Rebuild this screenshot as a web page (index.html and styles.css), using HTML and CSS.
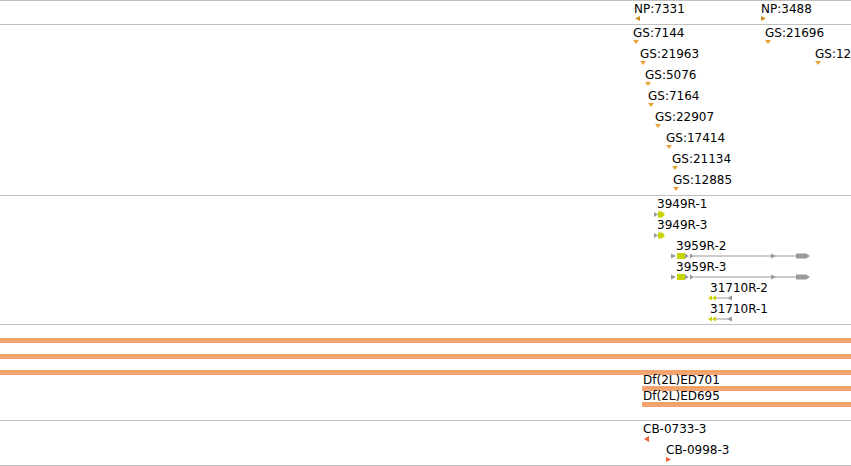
FILE: index.html
```html
<!DOCTYPE html>
<html lang="en">
<head>
  <meta charset="UTF-8" />
  <title>Track panel</title>
  <link rel="stylesheet" href="styles.css">
</head>
<body>
  <div class="panel">

    <!-- protein matches -->
    <div class="track track-proteins">
      <div class="row">
        <div class="feature np" style="left: 634px;">
          <span class="label">NP:7331</span>
          <svg class="glyph" width="6" height="5" viewBox="0 0 6 5"><path d="M6 0V5L1 2.5Z"/></svg>
        </div>
        <div class="feature np" style="left: 761px;">
          <span class="label">NP:3488</span>
          <svg class="glyph" width="5" height="5" viewBox="0 0 5 5"><path d="M0 0L5 2.5L0 5Z"/></svg>
        </div>
      </div>
    </div>

    <!-- insertion sites -->
    <div class="track track-insertions">
      <div class="row">
        <div class="feature gs" style="left: 633px;">
          <span class="label">GS:7144</span>
          <svg class="glyph" width="6" height="4" viewBox="0 0 6 4"><path d="M0 0H6L3 4Z"/></svg>
        </div>
        <div class="feature gs" style="left: 765px;">
          <span class="label">GS:21696</span>
          <svg class="glyph" width="6" height="4" viewBox="0 0 6 4"><path d="M0 0H6L3 4Z"/></svg>
        </div>
      </div>
      <div class="row">
        <div class="feature gs" style="left: 640px;">
          <span class="label">GS:21963</span>
          <svg class="glyph" width="6" height="4" viewBox="0 0 6 4"><path d="M0 0H6L3 4Z"/></svg>
        </div>
        <div class="feature gs" style="left: 815px;">
          <span class="label">GS:12</span>
          <svg class="glyph" width="6" height="4" viewBox="0 0 6 4"><path d="M0 0H6L3 4Z"/></svg>
        </div>
      </div>
      <div class="row">
        <div class="feature gs" style="left: 645px;">
          <span class="label">GS:5076</span>
          <svg class="glyph" width="6" height="4" viewBox="0 0 6 4"><path d="M0 0H6L3 4Z"/></svg>
        </div>
      </div>
      <div class="row">
        <div class="feature gs" style="left: 648px;">
          <span class="label">GS:7164</span>
          <svg class="glyph" width="6" height="4" viewBox="0 0 6 4"><path d="M0 0H6L3 4Z"/></svg>
        </div>
      </div>
      <div class="row">
        <div class="feature gs" style="left: 655px;">
          <span class="label">GS:22907</span>
          <svg class="glyph" width="6" height="4" viewBox="0 0 6 4"><path d="M0 0H6L3 4Z"/></svg>
        </div>
      </div>
      <div class="row">
        <div class="feature gs" style="left: 666px;">
          <span class="label">GS:17414</span>
          <svg class="glyph" width="6" height="4" viewBox="0 0 6 4"><path d="M0 0H6L3 4Z"/></svg>
        </div>
      </div>
      <div class="row">
        <div class="feature gs" style="left: 672px;">
          <span class="label">GS:21134</span>
          <svg class="glyph" width="6" height="4" viewBox="0 0 6 4"><path d="M0 0H6L3 4Z"/></svg>
        </div>
      </div>
      <div class="row">
        <div class="feature gs" style="left: 673px;">
          <span class="label">GS:12885</span>
          <svg class="glyph" width="6" height="4" viewBox="0 0 6 4"><path d="M0 0H6L3 4Z"/></svg>
        </div>
      </div>
    </div>

    <!-- gene models -->
    <div class="track track-genes">
      <div class="row">
        <div class="feature gene" style="left: 654px;">
          <span class="label" style="margin-left: 3px;">3949R-1</span>
          <svg class="glyph" width="11" height="7" viewBox="0 0 11 7">
            <path class="utr" d="M0 1L4 3.5L0 6Z"/>
            <path class="cds" d="M4 .5H8L11 3.5L8 6.5H4Z"/>
          </svg>
        </div>
      </div>
      <div class="row">
        <div class="feature gene" style="left: 654px;">
          <span class="label" style="margin-left: 3px;">3949R-3</span>
          <svg class="glyph" width="11" height="7" viewBox="0 0 11 7">
            <path class="utr" d="M0 1L4 3.5L0 6Z"/>
            <path class="cds" d="M4 .5H8L11 3.5L8 6.5H4Z"/>
          </svg>
        </div>
      </div>
      <div class="row">
        <div class="feature gene" style="left: 671px;">
          <span class="label" style="margin-left: 5px;">3959R-2</span>
          <svg class="glyph" width="139" height="6" viewBox="0 0 139 6">
            <path class="utr" d="M0 .5L5 3L0 5.5Z"/>
            <rect class="cds" x="6" y="0" width="8" height="6"/>
            <path class="utr" d="M14 .5L18 3L14 5.5ZM19 .5L23 3L19 5.5Z"/>
            <rect class="utr" x="23" y="2.5" width="102" height="1"/>
            <path class="utr" d="M100 .5L105 3L100 5.5Z"/>
            <path class="utr" d="M125 .5H135L139 3L135 5.5H125Z"/>
          </svg>
        </div>
      </div>
      <div class="row">
        <div class="feature gene" style="left: 671px;">
          <span class="label" style="margin-left: 5px;">3959R-3</span>
          <svg class="glyph" width="139" height="6" viewBox="0 0 139 6">
            <path class="utr" d="M0 .5L5 3L0 5.5Z"/>
            <rect class="cds" x="6" y="0" width="8" height="6"/>
            <path class="utr" d="M14 .5L18 3L14 5.5ZM19 .5L23 3L19 5.5Z"/>
            <rect class="utr" x="23" y="2.5" width="102" height="1"/>
            <path class="utr" d="M100 .5L105 3L100 5.5Z"/>
            <path class="utr" d="M125 .5H135L139 3L135 5.5H125Z"/>
          </svg>
        </div>
      </div>
      <div class="row">
        <div class="feature gene" style="left: 708px;">
          <span class="label" style="margin-left: 2px;">31710R-2</span>
          <svg class="glyph" width="24" height="6" viewBox="0 0 24 6">
            <path class="cds" d="M4 .5V5.5L0 3ZM8 .5V5.5L4 3Z"/>
            <rect class="utr" x="8" y="2.5" width="12" height="1"/>
            <path class="utr" d="M24 .5V5.5L19 3Z"/>
          </svg>
        </div>
      </div>
      <div class="row">
        <div class="feature gene" style="left: 708px;">
          <span class="label" style="margin-left: 2px;">31710R-1</span>
          <svg class="glyph" width="24" height="6" viewBox="0 0 24 6">
            <path class="cds" d="M4 .5V5.5L0 3ZM8 .5V5.5L4 3Z"/>
            <rect class="utr" x="8" y="2.5" width="12" height="1"/>
            <path class="utr" d="M24 .5V5.5L19 3Z"/>
          </svg>
        </div>
      </div>
    </div>

    <!-- deficiencies -->
    <div class="track track-deletions">
      <div class="row"><div class="deletion" style="left: 0;"><div class="bar"></div></div></div>
      <div class="row"><div class="deletion" style="left: 0;"><div class="bar"></div></div></div>
      <div class="row"><div class="deletion" style="left: 0;"><div class="bar"></div></div></div>
      <div class="row">
        <div class="deletion" style="left: 642px;">
          <span class="label">Df(2L)ED701</span>
          <div class="bar"></div>
        </div>
      </div>
      <div class="row">
        <div class="deletion" style="left: 642px;">
          <span class="label">Df(2L)ED695</span>
          <div class="bar"></div>
        </div>
      </div>
    </div>

    <!-- cDNA clones -->
    <div class="track track-clones">
      <div class="row">
        <div class="feature cb" style="left: 643px;">
          <span class="label">CB-0733-3</span>
          <svg class="glyph" width="6" height="6" viewBox="0 0 6 6"><path d="M6 0V6L1 3Z"/></svg>
        </div>
      </div>
      <div class="row">
        <div class="feature cb" style="left: 666px;">
          <span class="label">CB-0998-3</span>
          <svg class="glyph" width="5" height="5" viewBox="0 0 5 5"><path d="M0 0L5 2.5L0 5Z"/></svg>
        </div>
      </div>
    </div>

  </div>
</body>
</html>
```

FILE: styles.css
```css
:root {
  --track-border: #c0c0c0;
  --np-color: #c8901c;
  --gs-color: #eaa234;
  --cds-color: #c6d300;
  --utr-color: #999999;
  --deletion-color: #f5a46e;
  --clone-color: #f3603c;
}
html,
body {
  margin: 0;
}
body {
  background-color: #ffffff;
  color: #000000;
  font-family: "DejaVu Sans", sans-serif;
  font-size: 12px;
  width: 851px;
  height: 466px;
  overflow: hidden;
}
.panel {
  display: flex;
  flex-direction: column;
}
.track {
  box-sizing: border-box;
  border-top: 1px solid var(--track-border);
  padding-top: 2px;
  display: flex;
  flex-direction: column;
  overflow: hidden;
}
.track:last-child {
  border-bottom: 1px solid var(--track-border);
}
.track-proteins {
  height: 24px;
}
.track-insertions {
  height: 171px;
}
.track-genes {
  height: 129px;
}
.track-deletions {
  height: 96px;
}
.track-clones {
  height: 46px;
}
.row {
  position: relative;
  height: 21px;
  flex-shrink: 0;
}
.track-deletions .row {
  height: 16px;
}
.feature {
  position: absolute;
  top: 0;
  display: flex;
  flex-direction: column;
  align-items: flex-start;
}
.label {
  line-height: 12px;
  white-space: nowrap;
}
.glyph {
  display: block;
  margin-top: 1px;
}
.np .glyph {
  fill: var(--np-color);
}
.gs .glyph {
  fill: var(--gs-color);
}
.cb .glyph {
  fill: var(--clone-color);
}
.gene .cds {
  fill: var(--cds-color);
}
.gene .utr {
  fill: var(--utr-color);
}
.deletion {
  position: absolute;
  top: 0;
  right: 0;
  height: 16px;
  display: flex;
  flex-direction: column;
  justify-content: flex-end;
}
.deletion .label {
  line-height: 11px;
  margin-left: 1px;
}
.deletion .bar {
  height: 5px;
  background-color: var(--deletion-color);
}
```
